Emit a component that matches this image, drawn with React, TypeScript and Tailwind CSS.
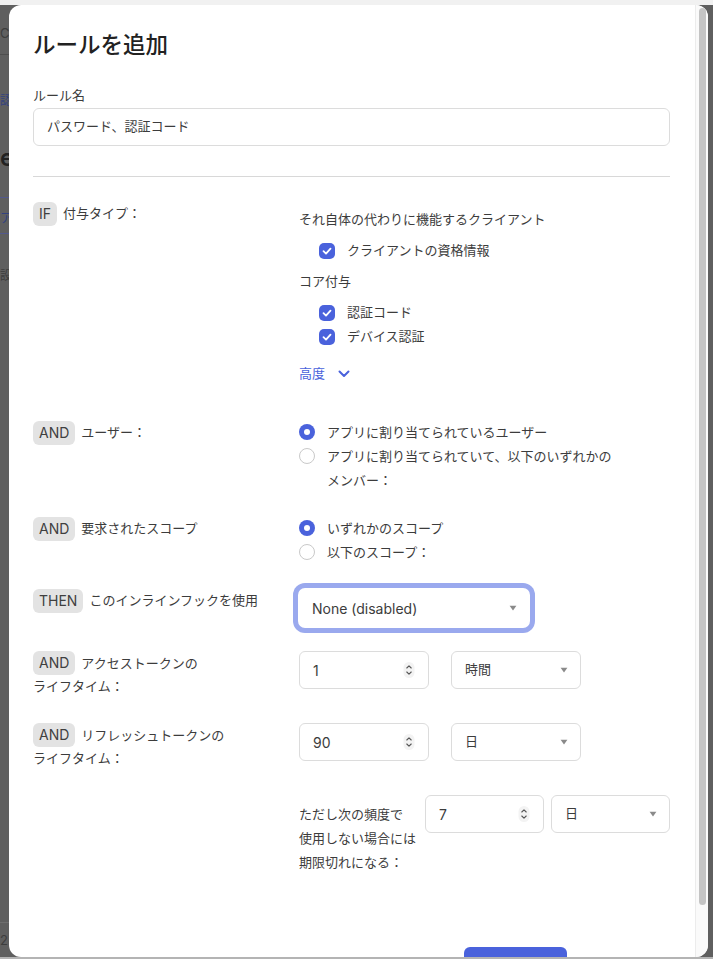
const font = "font-['Inter','Noto_Sans_CJK_JP',sans-serif]";

function Chip({ children }: { children: string }) {
  return (
    <span className="mr-[6px] inline-flex h-[24px] shrink-0 items-center rounded-[6px] bg-[#e3e3e3] px-[6px] text-[14px] leading-none text-[#3f3f3f]">
      {children}
    </span>
  );
}

function Check({ label, className = "" }: { label: string; className?: string }) {
  return (
    <div className={`flex h-[24px] items-center pl-[20px] ${className}`}>
      <span className="mr-[12px] flex h-[16px] w-[16px] items-center justify-center rounded-[5px] bg-[#4a62dc]">
        <svg width="10" height="10" viewBox="0 0 10 10" fill="none">
          <path d="M1.5 5.2 4 7.6 8.5 2.6" stroke="white" strokeWidth="1.8" strokeLinecap="round" strokeLinejoin="round" />
        </svg>
      </span>
      <span>{label}</span>
    </div>
  );
}

function Radio({ on, children }: { on?: boolean; children: React.ReactNode }) {
  return (
    <div className="flex items-start">
      <span
        className={`mt-[4px] mr-[12px] flex h-[16px] w-[16px] shrink-0 items-center justify-center rounded-full ${
          on ? "bg-[#4a62dc]" : "border border-[#c9c9c9] bg-white"
        }`}
      >
        {on && <span className="h-[6px] w-[6px] rounded-full bg-white" />}
      </span>
      <span className="leading-[24px]">{children}</span>
    </div>
  );
}

function NumberBox({ value, width }: { value: string; width: string }) {
  return (
    <div className={`flex h-[38px] shrink-0 items-center justify-between rounded-[6px] border border-[#dcdcdc] bg-white pr-[13px] pl-[13px] text-[14px] ${width}`}>
      <span>{value}</span>
      <svg width="12" height="18" viewBox="0 0 12 18" fill="none">
        <rect x="0.5" y="1" width="11" height="16" rx="5.5" fill="#f3f3f3" />
        <path d="M3.8 7 6 4.8 8.2 7M3.8 11 6 13.2 8.2 11" stroke="#555" strokeWidth="1.1" strokeLinecap="round" strokeLinejoin="round" />
      </svg>
    </div>
  );
}

function Caret() {
  return (
    <svg width="8" height="6" viewBox="0 0 8 6">
      <path d="M0.6 0.8h6.8L4 5.4z" fill="#8a8a8a" />
    </svg>
  );
}

function SelectBox({ value, width }: { value: string; width: string }) {
  return (
    <div className={`flex h-[38px] shrink-0 items-center justify-between rounded-[6px] border border-[#dcdcdc] bg-white pr-[12px] pl-[13px] ${width}`}>
      <span>{value}</span>
      <Caret />
    </div>
  );
}

function Row({ left, children, className = "" }: { left: React.ReactNode; children: React.ReactNode; className?: string }) {
  return (
    <div className={`flex items-start ${className}`}>
      <div className="w-[266px] shrink-0">{left}</div>
      <div className="min-w-0 flex-1">{children}</div>
    </div>
  );
}

// the page behind the dialog, only a sliver of it shows
function Backdrop() {
  return (
    <div className="w-[9px] shrink-0 overflow-hidden text-[#3d3d3d]">
      <div className="h-[50px] border-b border-[#4e4e4e] pt-[19px] text-[13px] leading-[18px]">C</div>
      <div className="h-[48px] pt-[38px] text-[12px] leading-[16px] text-[#33427f]">認</div>
      <div className="h-[94px] pt-[41px] text-[24px] leading-[28px] font-semibold text-[#222]">e</div>
      <div className="h-[37px] border-y border-[#52588c] pt-[10px] text-[13px] leading-[18px] text-[#33427f]">ア</div>
      <div className="h-[688px] pt-[34px] text-[12px] leading-[16px]">設</div>
      <div className="border-t border-[#6e6e6e] pt-[8px] text-[13px] leading-[18px]">2</div>
    </div>
  );
}

export default function App() {
  return (
    <div className={`flex h-[959px] w-[713px] flex-col overflow-hidden bg-[#5f5f5f] text-[13px] text-[#3c3c3c] ${font}`}>
      <div className="h-[5px] shrink-0 bg-[#f1f1f1]" />
      <div className="flex min-h-0 flex-1">
        <Backdrop />
        <div className="flex min-w-0 flex-1 overflow-hidden rounded-[12px] bg-white">
          <div className="min-w-0 flex-1 overflow-hidden pt-[23px] pr-[25px] pl-[24px]">
            <h1 className="text-[22.5px] leading-[34px] font-medium text-[#222]">ルールを追加</h1>

            <div className="mt-[24px] leading-[18px]">ルール名</div>
            <div className="mt-[4px] flex h-[38px] items-center rounded-[6px] border border-[#dcdcdc] bg-white pl-[13px]">
              パスワード、認証コード
            </div>
            <div className="mt-[30px] border-t border-[#d8d8d8]" />

            <Row
              className="mt-[25px]"
              left={
                <div className="flex items-center">
                  <Chip>IF</Chip>付与タイプ：
                </div>
              }
            >
              <div className="mt-[5px] leading-[24px]">それ自体の代わりに機能するクライアント</div>
              <Check label="クライアントの資格情報" className="mt-[8px]" />
              <div className="mt-[6px] leading-[24px]">コア付与</div>
              <Check label="認証コード" className="mt-[8px]" />
              <Check label="デバイス認証" />
              <div className="mt-[13px] flex h-[24px] items-center text-[#4a62dc]">
                高度
                <svg className="ml-[13px]" width="12" height="8" viewBox="0 0 12 8" fill="none">
                  <path d="M1.5 1.5 6 6l4.5-4.5" stroke="#4a62dc" strokeWidth="2" strokeLinecap="round" strokeLinejoin="round" />
                </svg>
              </div>
            </Row>

            <Row
              className="mt-[35px]"
              left={
                <div className="flex items-center">
                  <Chip>AND</Chip>ユーザー：
                </div>
              }
            >
              <div className="-mt-[1px]">
                <Radio on>アプリに割り当てられているユーザー</Radio>
                <Radio>
                  アプリに割り当てられていて、以下のいずれかの
                  <br />
                  メンバー：
                </Radio>
              </div>
            </Row>

            <Row
              className="mt-[25px]"
              left={
                <div className="flex items-center">
                  <Chip>AND</Chip>要求されたスコープ
                </div>
              }
            >
              <div className="-mt-[1px]">
                <Radio on>いずれかのスコープ</Radio>
                <Radio>以下のスコープ：</Radio>
              </div>
            </Row>

            <Row
              className="mt-[25px]"
              left={
                <div className="flex items-center">
                  <Chip>THEN</Chip>このインラインフックを使用
                </div>
              }
            >
              <div className="flex h-[38px] w-[230px] items-center justify-between rounded-[6px] bg-white pr-[12px] pl-[13px] text-[14px] shadow-[0_0_0_1px_#ffffff,0_0_0_6px_#9aa9ee]">
                <span>None (disabled)</span>
                <Caret />
              </div>
            </Row>

            <Row
              className="mt-[24px]"
              left={
                <div className="leading-[24px]">
                  <div className="flex items-center">
                    <Chip>AND</Chip>アクセストークンの
                  </div>
                  <div className="-mt-[1px]">ライフタイム：</div>
                </div>
              }
            >
              <div className="flex gap-[22px]">
                <NumberBox value="1" width="w-[130px]" />
                <SelectBox value="時間" width="w-[130px]" />
              </div>
            </Row>

            <Row
              className="mt-[25px]"
              left={
                <div className="leading-[24px]">
                  <div className="flex items-center">
                    <Chip>AND</Chip>リフレッシュトークンの
                  </div>
                  <div className="-mt-[1px]">ライフタイム：</div>
                </div>
              }
            >
              <div className="flex gap-[22px]">
                <NumberBox value="90" width="w-[130px]" />
                <SelectBox value="日" width="w-[130px]" />
              </div>
            </Row>

            <Row className="mt-[25px]" left={<div />}>
              <div className="flex items-start">
                <div className="w-[126px] shrink-0 pt-[7px] leading-[24px]">
                  ただし次の頻度で
                  <br />
                  使用しない場合には
                  <br />
                  期限切れになる：
                </div>
                <NumberBox value="7" width="w-[119px]" />
                <div className="ml-[7px] min-w-0 flex-1">
                  <SelectBox value="日" width="w-full" />
                </div>
              </div>
            </Row>

            <div className="mt-[73px] flex justify-end pr-[103px]">
              <div className="h-[40px] w-[103px] rounded-[6px] bg-[#4a62dc]" />
            </div>
          </div>

          <div className="w-[13px] shrink-0 border-l border-[#ececec] bg-[#fafafa] pt-[3px] pl-[3px]">
            <div className="h-[897px] w-[7px] rounded-full bg-[#c4c4c4]" />
          </div>
        </div>
        <div className="w-[5px] shrink-0" />
      </div>
      <div className="h-[2px] shrink-0 bg-[#b4b4b4]" />
    </div>
  );
}
